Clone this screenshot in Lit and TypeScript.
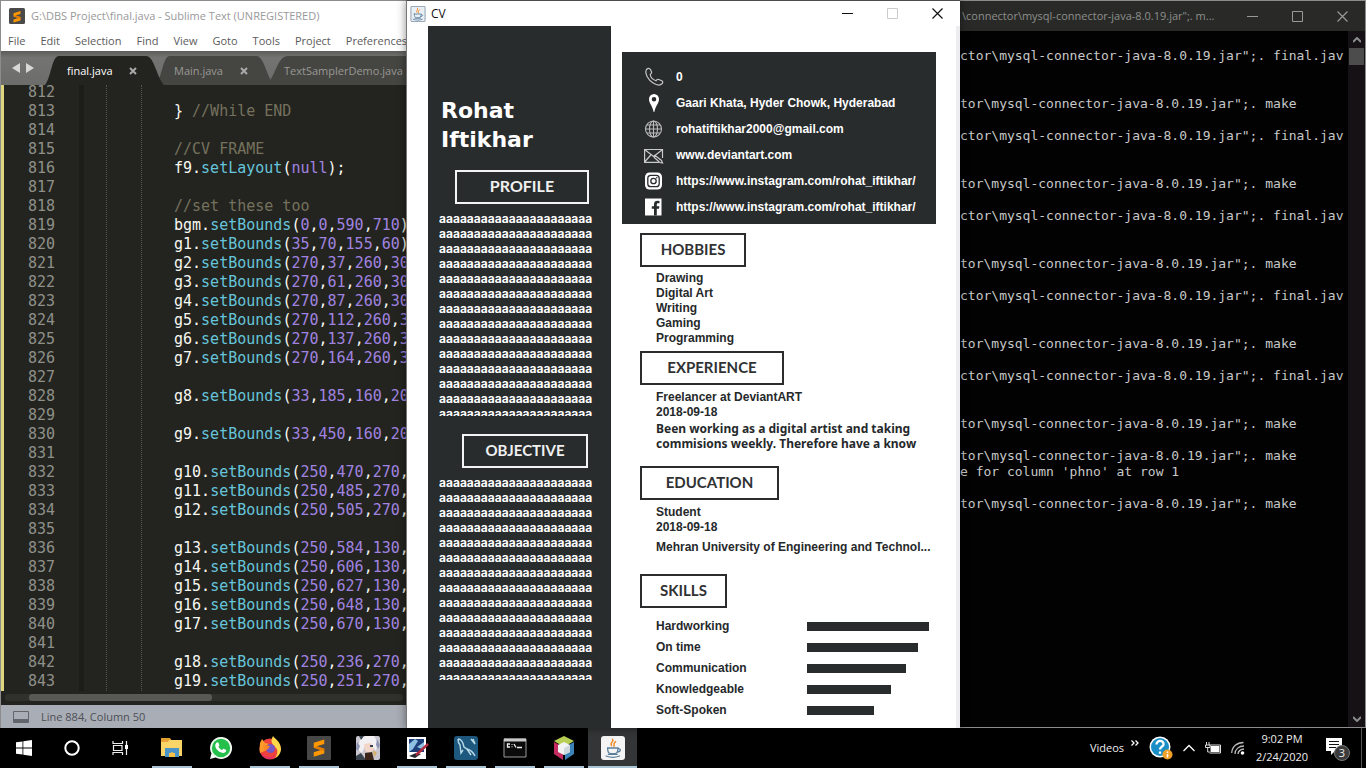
import { LitElement, html, svg, css } from 'lit';
import { customElement } from 'lit/decorators.js';
import { classMap } from 'lit/directives/class-map.js';
import { styleMap } from 'lit/directives/style-map.js';

const reset = css`
  *, *::before, *::after { box-sizing: border-box; }
  button { border: 0; padding: 0; margin: 0; background: none; color: inherit; font: inherit; white-space: nowrap; }
  h1, h2, p, ul { margin: 0; padding: 0; font-weight: inherit; font-size: inherit; }
  ul { list-style: none; }
  a { color: inherit; text-decoration: none; }
  svg { display: block; flex: none; }
`;

const sublimeS = svg`
  <path fill="#ff9800" d="M23 6v6l-10 3 10 3.2v6.6L9 29v-6l9.500-3L9 17v-6.600z"/>
  <path fill="#e07c00" d="M9 17l14 4.500v-3.300L13 15z"/>`;

const javaCup = svg`
  <g fill="none" stroke-linecap="round">
    <path d="M13 4c3 3-4 4-1 8M17 7c-4 3-1 4-2 6" stroke="#f08a24" stroke-width="1.800"/>
    <path d="M7 15h13c0 5-2 7-4 7h-5c-2 0-4-2-4-7zM20 16c4-1 4 4-1 4" stroke="#5b7f9c" stroke-width="1.600"/>
    <path d="M5 25c5 2 12 2 17 0M8 23h11" stroke="#5b7f9c" stroke-width="1.500"/>
  </g>`;

type Token = [string, string];
const call = (obj: string, fn: string, args: string, close = ''): Token[] => {
  const out: Token[] = [['id', obj + '.'], ['fn', fn], ['id', '(']];
  args.split(/(,)/).forEach((p) => p && out.push([p === ',' ? 'id' : 'num', p]));
  if (close) out.push(['id', close]);
  return out;
};
const bounds = (obj: string, args: string, close = '') => call(obj, 'setBounds', args, close);

const code: Record<number, Token[]> = {
  813: [['id', '} '], ['rem', '//While END']],
  815: [['rem', '//CV FRAME']],
  816: call('f9', 'setLayout', 'null', ');'),
  818: [['rem', '//set these too']],
  819: bounds('bgm', '0,0,590,710', ')'),
  820: bounds('g1', '35,70,155,60', ')'),
  821: bounds('g2', '270,37,260,30'),
  822: bounds('g3', '270,61,260,30'),
  823: bounds('g4', '270,87,260,30'),
  824: bounds('g5', '270,112,260,30'),
  825: bounds('g6', '270,137,260,30'),
  826: bounds('g7', '270,164,260,30'),
  828: bounds('g8', '33,185,160,20'),
  830: bounds('g9', '33,450,160,20'),
  832: bounds('g10', '250,470,270,'),
  833: bounds('g11', '250,485,270,'),
  834: bounds('g12', '250,505,270,'),
  836: bounds('g13', '250,584,130,'),
  837: bounds('g14', '250,606,130,'),
  838: bounds('g15', '250,627,130,'),
  839: bounds('g16', '250,648,130,'),
  840: bounds('g17', '250,670,130,'),
  842: bounds('g18', '250,236,270,'),
  843: bounds('g19', '250,251,270,'),
};

@customElement('editor-window')
export class EditorWindow extends LitElement {
  static styles = [reset, css`
    :host { display: flex; flex-direction: column; min-width: 0; overflow: hidden; background: #fff;
      border-top: 1px solid #8c8c8c; border-left: 1px solid #8c8c8c;
      font: 11px/16px "Open Sans", "Noto Sans", sans-serif; white-space: nowrap; }
    .title { display: flex; align-items: center; gap: 6px; height: 30px; padding-left: 8px; color: #999; }
    .menu { display: flex; align-items: center; gap: 15px; height: 20px; padding-left: 7px; color: #5a5a5a; }
    .tabs { display: flex; align-items: flex-end; height: 34px; background: linear-gradient(#5c5c5a, #747472 20%, #6c6c6a); }
    .arrows { display: flex; align-items: center; flex: none; width: 44px; height: 34px; padding-left: 11px; }
    .tab { position: relative; display: flex; align-items: center; justify-content: space-between; height: 29px;
      flex: none; width: 110px; padding: 0 18px 0 18px; color: #999994; }
    .tab.wide { width: 180px; }
    .tab svg.shape { position: absolute; inset: 0 -8px 0 0; width: calc(100% + 8px); height: 100%; color: #454542; }
    .tab.active { color: #fff; z-index: 1; width: 111px; padding: 0 19px 0 22px; }
    .tab.active svg.shape { color: #23241f; }
    .tab > span, .tab > button { position: relative; }
    .editor { flex: 1; min-height: 0; display: flex; overflow: hidden; background: #23241f; border-left: 3px solid #ded67e;
      font: 15px/19px "DejaVu Sans Mono", monospace; }
    .numbers { flex: none; width: 75px; padding-left: 24px; margin-top: -2px; color: #8f908a; }
    .row { height: 19px; white-space: pre; }
    .fold { flex: none; width: 5px; background: #1c1d19; }
    .guides { flex: none; width: 36px; margin-left: 22px; border-left: 1px dotted #55564f; border-right: 1px dotted #55564f; }
    .lines { flex: 1; min-width: 0; overflow: hidden; margin-top: -2px; padding-left: 32px; }
    .id { color: #f8f8f2; } .fn { color: #66c5dc; } .num { color: #a083e0; } .rem { color: #75715e; }
    .scroll { height: 14px; padding: 3px 3px 4px 4px; background: #23241f; }
    .track { height: 7px; border-radius: 3px; background: #30312c; padding-left: 24px; }
    .thumb { width: 49%; height: 7px; border-radius: 3px; background: #585955; }
    .status { display: flex; align-items: center; gap: 12px; height: 23px; padding-left: 12px; background: #a9adb5; color: #4c5056; }
  `];

  private tab(name: string, cls: Record<string, boolean>, close = true) {
    return html`<div class=${classMap({ tab: true, ...cls })}>
      <svg class="shape" viewBox="0 0 120 29" preserveAspectRatio="none"><path fill="currentColor" d="M0 29C6 22 7 0 14 0h88c8 0 11 22 18 29z"/></svg>
      <span>${name}</span>
      ${close ? html`<button aria-label="Close ${name}"><svg width="8" height="8" viewBox="0 0 8 8"><path d="M1 1l6 6M7 1L1 7" stroke="#aaa" stroke-width="2"/></svg></button>` : ''}
    </div>`;
  }

  render() {
    const rows = Array.from({ length: 32 }, (_, i) => 812 + i);
    return html`
      <header class="title">
        <svg width="16" height="16" viewBox="0 0 32 32"><rect width="32" height="32" rx="3" fill="#4a4a4a"/>${sublimeS}</svg>
        <span>G:\\DBS Project\\final.java - Sublime Text (UNREGISTERED)</span>
      </header>
      <nav class="menu">
        ${['File', 'Edit', 'Selection', 'Find', 'View', 'Goto', 'Tools', 'Project', 'Preferences'].map((m) => html`<button>${m}</button>`)}
      </nav>
      <div class="tabs">
        <div class="arrows">
          <svg width="22" height="10" viewBox="0 0 22 10"><path fill="#d8d8d6" d="M8 0v10L0 5zM14 0v10l8-5z"/></svg>
        </div>
        ${this.tab('final.java', { active: true })}
        ${this.tab('Main.java', {})}
        ${this.tab('TextSamplerDemo.java', { wide: true }, false)}
      </div>
      <div class="editor">
        <div class="numbers">${rows.map((n) => html`<div class="row">${n}</div>`)}</div>
        <div class="fold"></div>
        <div class="guides"></div>
        <div class="lines">${rows.map((n) => html`<div class="row">${(code[n] ?? []).map(([k, t]) => html`<span class=${k}>${t}</span>`)}</div>`)}</div>
      </div>
      <div class="scroll"><div class="track"><div class="thumb"></div></div></div>
      <footer class="status">
        <svg width="16" height="12" viewBox="0 0 16 12"><path d="M.5.5h15v11H.5z" fill="none" stroke="#62666c"/><path d="M1 8h14v3H1z" fill="#62666c"/></svg>
        <span>Line 884, Column 50</span>
      </footer>`;
  }
}

const contactIcons = {
  phone: svg`<path fill="none" stroke="#c4c6c7" stroke-width="1.200" d="M2.500 2.500C4 .8 5.500 1 6.500 2.500l1 2.500c.3 1-.2 1.700-1.300 2.500.4 2.500 3 5.300 5.800 6.200.8-1.400 1.700-1.700 2.800-1.200l3 1.300c1.200.7 1.300 1.600.4 2.700-1.700 1.900-5 2-9-.4C4.500 13.300.2 6.500 2.500 2.500z"/>`,
  pin: svg`<path fill="#fff" fill-rule="evenodd" d="M10 1a5 5 0 0 1 5 5.200C15 10 11.500 13 10.300 19h-.6C8.500 13 5 10 5 6.200A5 5 0 0 1 10 1zm0 3a2.300 2.300 0 1 0 0 4.600A2.300 2.300 0 0 0 10 4z"/>`,
  globe: svg`<g fill="none" stroke="#b9bbbc" stroke-width="1.100"><circle cx="9.500" cy="10" r="8"/><ellipse cx="9.500" cy="10" rx="4" ry="8"/><path d="M9.500 2v16M1.500 10h16M3 6h13M3 14h13"/></g>`,
  mail: svg`<g fill="none" stroke="#c8cacb" stroke-width="1.200"><path d="M18.500 13V4.500H.6v12.800H15M.6 4.500l9 7 9-7M.6 17l6.200-7"/><path d="M11 10.500l6.500 5 1 2.500-2.700-.5-5.500-5z"/></g>`,
  insta: svg`<rect x="1" y="1.500" width="17" height="17" rx="4.500" fill="#fff"/><g fill="none" stroke="#292c2d" stroke-width="1.300"><rect x="3.800" y="4.300" width="11.400" height="11.400" rx="3"/><circle cx="9.500" cy="10" r="2.700"/></g><circle cx="12.800" cy="6.700" r=".8" fill="#292c2d"/>`,
  facebook: svg`<path fill="#fff" d="M1 1.500h16.500v17H1z"/><path fill="#292c2d" d="M10 18.500v-6.800H7.800V9.200H10V7.300C10 4.900 11.400 3.800 13.500 3.800l2 .1v2.400h-1.400c-1 0-1.300.5-1.300 1.200v1.700h2.600l-.4 2.500h-2.200v6.800z"/>`,
};

@customElement('cv-window')
export class CvWindow extends LitElement {
  static styles = [reset, css`
    :host { display: flex; flex-direction: column; min-width: 0; overflow: hidden; background: #fff; color: #26292b;
      border-top: 1px solid #4b4b4b; border-left: 1px solid #777; z-index: 1; box-shadow: 0 0 9px rgba(0, 0, 0, .45);
      font: bold 12px/15px "Liberation Sans", Arial, sans-serif; white-space: nowrap; }
    .title { display: flex; align-items: center; height: 25px; padding-left: 3px; color: #111; font: 12px/16px "Open Sans", sans-serif; }
    .title span { flex: 1; padding-left: 5px; }
    .title button { display: grid; place-items: center; width: 45px; height: 25px; }
    .page { flex: 1; min-height: 0; display: flex; gap: 11px; padding-left: 21px; border-right: 4px solid #ededef; }
    .side { flex: none; width: 183px; background: #292c2d; color: #fff; padding: 70px 18px 0 11px; }
    .side h1 { font: bold 22px/29px "DejaVu Sans", Verdana, sans-serif; padding-left: 2px; height: 74px; }
    .box { border: 2px solid #2b2c2e; height: 34px; width: max-content; font: bold 15px/28px Lato, sans-serif; text-align: center; color: #303234; }
    .side .box { border-color: #f4f4f4; color: #f0f0f0; }
    .side .profile { width: 134px; margin-left: 16px; font-size: 16px; }
    .side .objective { width: 126px; margin: 18px 0 0 23px; }
    .filler { height: 205px; overflow: hidden; margin-top: 7px; font: bold 12px/15px Inter, sans-serif; }
    .main { flex: 1; min-width: 0; padding: 26px 20px 0 0; }
    .contact { background: #292c2d; color: #fff; padding: 12px 0 4px 22px; margin-bottom: 9px; }
    .contact li { display: flex; align-items: center; gap: 12px; height: 26px; }
    .body { padding-left: 18px; }
    .block { padding: 4px 0 0 16px; }
    .hobbies { width: 106px; } .experience { width: 144px; } .education { width: 139px; } .skills { width: 87px; }
    .hobby-list { height: 84px; }
    .experience-text { height: 81px; padding-top: 5px; }
    .experience-text p { margin-top: 1px; font-family: "Noto Sans", sans-serif; }
    .education-text { height: 74px; padding-top: 5px; }
    .education-text p { margin-top: 5px; }
    .skill-list { padding: 8px 0 0 16px; }
    .skill-list li { display: flex; align-items: center; height: 21px; }
    .skill-list span { width: 151px; }
    .bar { height: 9px; background: #292c2d; }
  `];

  private skills: [string, number][] = [['Hardworking', 122], ['On time', 111], ['Communication', 99], ['Knowledgeable', 84], ['Soft-Spoken', 67]];

  private filler() {
    return html`<div class="filler">${Array.from({ length: 14 }, () => html`<div>${'a'.repeat(22)}</div>`)}</div>`;
  }
  private icon(k: keyof typeof contactIcons) {
    return html`<svg width="20" height="20" viewBox="0 0 20 20">${contactIcons[k]}</svg>`;
  }

  render() {
    return html`
      <header class="title">
        <svg width="16" height="16" viewBox="0 0 28 30"><rect x=".7" y=".7" width="26.600" height="28.600" rx="2" fill="#e9f0f5" stroke="#6d8296" stroke-width="1.400"/>${javaCup}</svg>
        <span>CV</span>
        <button aria-label="Minimize"><svg width="11" height="11" viewBox="0 0 11 11"><path d="M0 5.500h11" stroke="#111"/></svg></button>
        <button aria-label="Maximize" disabled><svg width="11" height="11" viewBox="0 0 11 11"><path d="M.5.5h10v10H.5z" fill="none" stroke="#ccc"/></svg></button>
        <button aria-label="Close"><svg width="11" height="11" viewBox="0 0 11 11"><path d="M.5.5l10 10M10.500.5l-10 10" stroke="#111" stroke-width="1.200"/></svg></button>
      </header>
      <div class="page">
        <aside class="side">
          <h1>Rohat<br>Iftikhar</h1>
          <h2 class="box profile">PROFILE</h2>
          ${this.filler()}
          <h2 class="box objective">OBJECTIVE</h2>
          ${this.filler()}
        </aside>
        <main class="main">
          <ul class="contact">
            <li>${this.icon('phone')}<span>0</span></li>
            <li>${this.icon('pin')}<span>Gaari Khata, Hyder Chowk, Hyderabad</span></li>
            <li>${this.icon('globe')}<a href="#">rohatiftikhar2000@gmail.com</a></li>
            <li>${this.icon('mail')}<a href="#">www.deviantart.com</a></li>
            <li>${this.icon('insta')}<a href="#">https://www.instagram.com/rohat_iftikhar/</a></li>
            <li>${this.icon('facebook')}<a href="#">https://www.instagram.com/rohat_iftikhar/</a></li>
          </ul>
          <div class="body">
            <h2 class="box hobbies">HOBBIES</h2>
            <ul class="block hobby-list">${['Drawing', 'Digital Art', 'Writing', 'Gaming', 'Programming'].map((h) => html`<li>${h}</li>`)}</ul>
            <h2 class="box experience">EXPERIENCE</h2>
            <div class="block experience-text">
              <div>Freelancer at DeviantART</div><div>2018-09-18</div>
              <p>Been working as a digital artist and taking<br>commisions weekly. Therefore have a know</p>
            </div>
            <h2 class="box education">EDUCATION</h2>
            <div class="block education-text">
              <div>Student</div><div>2018-09-18</div>
              <p>Mehran University of Engineering and Technol...</p>
            </div>
            <h2 class="box skills">SKILLS</h2>
            <ul class="skill-list">${this.skills.map(([n, w]) => html`<li><span>${n}</span><div class="bar" style=${styleMap({ width: `${w}px` })}></div></li>`)}</ul>
          </div>
        </main>
      </div>`;
  }
}

const jar = 'tor\\mysql-connector-java-8.0.19.jar";. ';
const compile = 'c' + jar + 'final.jav';
const run = jar + 'make';
const output = [
  '', compile, '', '', run, '', compile, '', '', run, '', compile, '', '', run, '', compile, '', '', run, '',
  compile, '', '', run, '', run, "e for column 'phno' at row 1", '', run,
];

@customElement('console-window')
export class ConsoleWindow extends LitElement {
  static styles = [reset, css`
    :host { display: flex; flex-direction: column; min-width: 0; overflow: hidden; background: #020203;
      border: 1px solid #8c8c8c; border-left: 0; white-space: nowrap; }
    .title { display: flex; align-items: center; height: 30px; background: #292a28; color: #8d8f8c; font: 11px/16px "Open Sans", sans-serif; }
    .title span { flex: 1; min-width: 0; overflow: hidden; padding-left: 2px; }
    .title button { display: grid; place-items: center; width: 45px; height: 28px; flex: none; }
    .view { flex: 1; min-height: 0; display: flex; }
    pre { flex: 1; min-width: 0; overflow: hidden; margin: 0; padding-top: 1px; color: #c8c8c8; font: 13px/16px "DejaVu Sans Mono", monospace; }
    pre div { height: 16px; }
    .bar { flex: none; width: 17px; display: flex; flex-direction: column; align-items: center; background: #151114; }
    .bar button { display: grid; place-items: center; width: 17px; height: 17px; }
    .thumb { width: 15px; height: 17px; background: #4c4c4c; }
    .spacer { flex: 1; }
  `];
  render() {
    const chevron = (d: string) => html`<svg width="8" height="6" viewBox="0 0 8 6"><path d=${d} fill="none" stroke="#8c8c8c" stroke-width="2"/></svg>`;
    return html`
      <header class="title">
        <span>\\connector\\mysql-connector-java-8.0.19.jar";. m...</span>
        <button aria-label="Minimize"><svg width="11" height="11" viewBox="0 0 11 11"><path d="M0 5.500h11" stroke="#999"/></svg></button>
        <button aria-label="Maximize"><svg width="11" height="11" viewBox="0 0 11 11"><path d="M.5.5h10v10H.5z" fill="none" stroke="#999"/></svg></button>
        <button aria-label="Close"><svg width="11" height="11" viewBox="0 0 11 11"><path d="M.5.5l10 10M10.500.5l-10 10" stroke="#999" stroke-width="1.200"/></svg></button>
      </header>
      <div class="view">
        <pre>${output.map((l) => html`<div>${l}</div>`)}</pre>
        <div class="bar">
          <button aria-label="Scroll up">${chevron('M0 5l4-4 4 4')}</button>
          <div class="thumb"></div><div class="spacer"></div>
          <button aria-label="Scroll down">${chevron('M0 1l4 4 4-4')}</button>
        </div>
      </div>`;
  }
}

const apps = [
  { name: 'File Explorer', open: true, art: svg`<path fill="#e0a02c" d="M1 2h9l2 3h-11z"/><path fill="#f9d568" d="M1 4h21v16H1z"/><path fill="#e9a23b" d="M1 4h8l-1 2H1z"/><path fill="#4b94c8" d="M5 12h14v9h-4v-4H9v4H5z"/><path fill="#f9c14a" d="M9 18l3-2 3 2v3H9z"/>` },
  { name: 'WhatsApp', open: false, art: svg`<path fill="#f1fbf2" d="M12 1a11 11 0 1 1-5.300 20.600L1 23l1.500-5.500A11 11 0 0 1 12 1z"/><circle cx="12" cy="12" r="9.200" fill="#25c04c"/><path fill="#fff" d="M8 6.500c.8-.4 1.300 0 1.600.8l.7 1.700c.2.6-.7 1.200-.8 1.700.7 1.500 1.900 2.600 3.500 3.200.6-.2 1-1.400 1.700-1.200l2 1c.7.4.6.9.3 1.600-.8 1.700-2.900 2-4.700 1.300-2.800-1-5-3.200-5.900-5.900-.4-1.500.1-3.300 1.600-4.200z"/>` },
  { name: 'Firefox', open: true, art: svg`<circle cx="12" cy="13" r="10.500" fill="#f0423c"/><path fill="#ff9a2b" d="M2 7l2-4 3 4 4 1c-4 2-3 5-2 6l-7 3c-1-4 0-7 0-10z"/><path fill="#ffd84a" d="M15 0c2 3 8 6 8 13 0 4-3 8-6 9 3-4 3-8 1-10-2-3-7-5-3-12z"/><path fill="#e52e6c" d="M3 17c4 5 11 5 14 2-1 3-4 4.500-7 4-3-.6-6-3-7-6z"/><circle cx="12.500" cy="12.500" r="4.500" fill="#7557c5"/><path fill="#ff8a24" d="M5 9l7 1-2 3-4 2z"/>` },
  { name: 'Sublime Text', open: true, art: svg`<rect width="24" height="24" rx="1" fill="#474747"/><g transform="translate(0 -1) scale(.75)">${sublimeS}</g>` },
  { name: 'Game', open: false, art: svg`<rect width="24" height="24" rx="2" fill="#c9c6cf"/><path fill="#f2f0f2" d="M4 2l6-2h8l4 7-2 8-5-6-6 1-3 7-4-3z"/><path fill="#f3d6c8" d="M8 8l7-1 3 6-4 4-5-2z"/><path fill="#8d93b5" d="M1 6l3 4-2 5-2-2zM21 3l3 6-2 4-2-4z"/><path fill="#39424f" d="M14 9h3v2h-3zM0 20l5-3 5 7H0zM3 0h5L5 4z"/><path fill="#3b251b" d="M9 17l7-1 2 8H9z"/><path fill="#d8ae62" d="M17 14l4 3-3 4z"/>` },
  { name: 'Image Editor', open: true, art: svg`<path fill="#fff" d="M2 1h19v22H2z"/><path fill="#1c3e79" d="M4 3h15v13H4z"/><path fill="#8fc0e2" d="M4 8l6-5 3 2-5 8-4 3zM12 11l7-5v8z"/><path fill="#23282d" d="M4 20l7-3 5 1-6 4z"/><path stroke="#b02a3e" stroke-width="2.400" d="M23 8L11 19"/>` },
  { name: 'MySQL Workbench', open: true, art: svg`<rect width="24" height="24" rx="3" fill="#1f587f"/><path fill="none" stroke="#b9dbe8" stroke-width="1.400" d="M4 3c3 0 5 3 6 8l3 2c4 1 6 3 8 7M4 3c0 3 1 5 2 6l1 8 2-3M13 13l4 6M17 3l4 5-2-5"/>` },
  { name: 'Command Prompt', open: true, art: svg`<path fill="#0b0b0b" stroke="#9a9a9a" d="M1 3h22v18H1z"/><path fill="#c9c9c9" d="M1 2.500h22v3H1z"/><path fill="none" stroke="#eee" stroke-width="1.300" d="M7 8H4.500v3H7M9 8v.8M9 10.500v.8M11 8l2 3.500M14 11.500h5"/>` },
  { name: 'NetBeans', open: true, art: svg`<path fill="#b7cf55" d="M12 0l10 5-10 6L2 5z"/><path fill="#c52a60" d="M2 6l9 5v13L2 18z"/><path fill="#3b82b8" d="M22 6l-9 5v13l9-6z"/><path fill="#f1f4f3" d="M12 6l6 3v7l-6 3-6-3V9z"/><path fill="#cfd8dc" d="M12 12l6-3v7l-6 3z"/>` },
  { name: 'Java', open: true, active: true, art: svg`<rect width="24" height="24" rx="3" fill="#f4f4f4"/><g transform="translate(1 0) scale(.8)">${javaCup}</g>` },
];

@customElement('task-bar')
export class TaskBar extends LitElement {
  static styles = [reset, css`
    :host { display: flex; height: 40px; background: #000; color: #eee; font: 12px/18px "Open Sans", sans-serif; white-space: nowrap; }
    .system button { width: 48px; }
    .system, .apps, .tray { display: flex; }
    .system button, .apps button { display: grid; place-items: center; height: 40px; }
    .apps { flex: 1; padding-left: 3px; }
    .apps button { position: relative; width: 49px; }
    .apps button.open::after { content: ""; position: absolute; left: 5px; right: 4px; bottom: 0; height: 2px; background: #a9c4d4; }
    .apps button.active { background: #343536; }
    .apps button.active::after { left: 0; right: 0; }
    .tray { align-items: center; gap: 10px; margin-right: 4px; padding-right: 12px; border-right: 1px solid #555; }
    .more { display: flex; gap: 7px; font-size: 11px; }
    .more svg { margin-top: 1px; }
    .clock { text-align: center; font-size: 11px; width: 54px; }
    .notice { position: relative; margin-left: 7px; }
    .count { position: absolute; left: 8px; top: 7px; width: 16px; height: 16px; border-radius: 8px; background: #3b3b3b; border: 1px solid #777; font: 11px/14px "Open Sans", sans-serif; text-align: center; }
  `];
  render() {
    return html`
      <div class="system">
        <button aria-label="Start"><svg width="16" height="16" viewBox="0 0 16 16"><path fill="#fff" d="M0 2.300L6.500 1.400v6.200H0zM7.300 1.300L16 0v7.600H7.300zM0 8.400h6.500v6.200L0 13.700zM7.300 8.400H16V16l-8.700-1.300z"/></svg></button>
        <button aria-label="Cortana"><svg width="16" height="16" viewBox="0 0 16 16"><circle cx="8" cy="8" r="6.700" fill="none" stroke="#fff" stroke-width="2"/></svg></button>
        <button aria-label="Task View"><svg width="17" height="16" viewBox="0 0 17 16"><path d="M1 1v2.500h9.500V1M1 15v-2.500h9.500V15M1.500 5.500h8.500v5H1.500zM14.500 1v14" fill="none" stroke="#eee" stroke-width="1.200"/><path fill="#fff" d="M13 5h3v4h-3z"/></svg></button>
      </div>
      <div class="apps">
        ${apps.map((a) => html`<button aria-label=${a.name} class=${classMap({ open: a.open, active: !!a.active })}><svg width="24" height="24" viewBox="0 0 24 24">${a.art}</svg></button>`)}
      </div>
      <div class="tray">
        <div class="more"><span>Videos</span><svg width="8" height="6" viewBox="0 0 8 6"><path d="M.5.500L3 3 .5 5.500M4.500.500L7 3 4.500 5.500" fill="none" stroke="#fff" stroke-width="1.300"/></svg></div>
        <button aria-label="Help"><svg width="24" height="24" viewBox="0 0 24 24"><circle cx="11" cy="11" r="10.500" fill="#fff"/><circle cx="11" cy="11" r="9" fill="#1b8ec6"/><path d="M7.500 8.500c0-5 7.500-4.500 7 0-.3 2.200-3.500 2.300-3.500 5M11 15.500v2.300" fill="none" stroke="#fff" stroke-width="2.300"/><circle cx="18.500" cy="18.500" r="5" fill="#f0a028"/><path d="M18.500 15.500v1.500M18.500 18v3.500" stroke="#fff" stroke-width="1.500"/></svg></button>
        <button aria-label="Show hidden icons"><svg width="12" height="8" viewBox="0 0 12 8"><path d="M.5 7L6 1.500 11.500 7" fill="none" stroke="#fff" stroke-width="1.300"/></svg></button>
        <svg width="16" height="12" viewBox="0 0 16 12"><path d="M5.500 4h9v6h-9z" fill="#fff"/><path d="M4.500 3h11v8h-11M1.500 0v3M4 0v3M.5 3h4.500v2.500H.500zM2.700 5.500V10h2" fill="none" stroke="#ddd"/></svg>
        <svg width="14" height="14" viewBox="0 0 14 14"><g fill="none" stroke="#bbb" stroke-width="1.300"><path d="M.7 12C1 5.500 6 1.500 12.500 1.500M4 13c0-5 4-8 9-8M7 13c0-3 3-5 6-5"/></g><circle cx="11.500" cy="12" r="1.800" fill="#fff"/></svg>
        <div class="clock"><div>9:02 PM</div><div>2/24/2020</div></div>
        <button class="notice" aria-label="Notifications"><svg width="23" height="20" viewBox="0 0 23 20"><path fill="#fff" d="M0 0h16v13H9l-4 4v-4H0z"/><path d="M3 3.500h10M3 6.500h10M3 9.500h7" stroke="#111"/></svg><span class="count">3</span></button>
      </div>`;
  }
}

@customElement('app-root')
export class AppRoot extends LitElement {
  static styles = css`
    :host { display: flex; flex-direction: column; height: 100vh; overflow: hidden; background: #000; }
    .desktop { flex: 1; min-height: 0; display: grid; grid-template: minmax(0, 1fr) / minmax(0, 1fr) 554px minmax(0, 1fr); }
  `;
  render() {
    return html`
      <div class="desktop">
        <editor-window></editor-window>
        <cv-window></cv-window>
        <console-window></console-window>
      </div>
      <task-bar></task-bar>`;
  }
}
